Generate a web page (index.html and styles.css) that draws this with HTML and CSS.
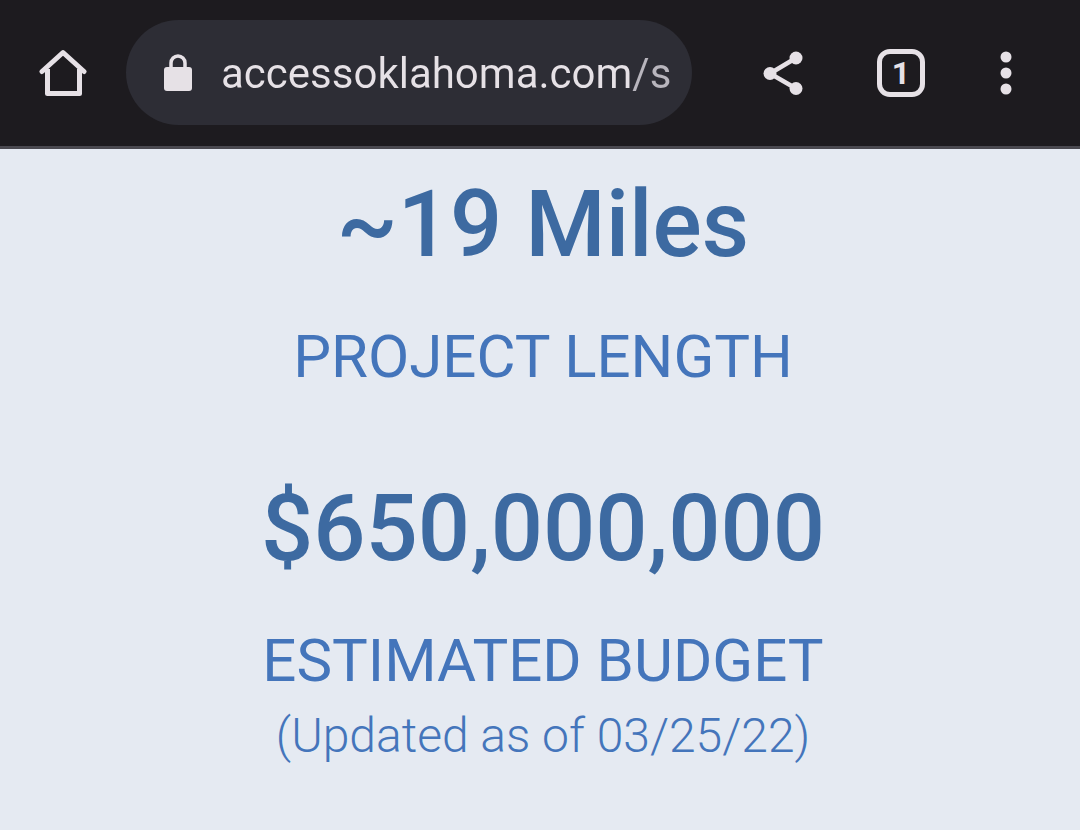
FILE: index.html
```html
<!DOCTYPE html>
<html lang="en">

<head>
  <meta charset="UTF-8">
  <meta name="viewport" content="width=device-width, initial-scale=1.0">
  <title>ACCESS Oklahoma</title>
  <link rel="stylesheet" href="styles.css">
</head>

<body>
  <header class="toolbar">
    <button class="tool home" type="button" aria-label="Home">
      <svg width="48" height="48" viewBox="0 0 48 48" fill="none" stroke="currentColor" stroke-width="5" stroke-linejoin="round">
        <path d="M3 22.500L24 3.500L45 22.500" stroke-linecap="round" />
        <path d="M8.500 20V44.500H40.500V20" />
      </svg>
    </button>
    <div class="address">
      <svg width="30" height="38" viewBox="0 0 30 38" aria-hidden="true">
        <rect x="1" y="13" width="28" height="24" rx="3" fill="currentColor" />
        <path d="M8 14V9a7 7 0 0 1 14 0v5" fill="none" stroke="currentColor" stroke-width="3.500" />
      </svg>
      <input class="url" type="text" value="accessoklahoma.com/s" aria-label="Address" spellcheck="false">
    </div>
    <button class="tool share" type="button" aria-label="Share">
      <svg width="44" height="46" viewBox="0 0 44 46" fill="currentColor">
        <path d="M35 8L9 23.500L35 38.500" fill="none" stroke="currentColor" stroke-width="4.500" />
        <circle cx="35" cy="8" r="6.500" />
        <circle cx="9" cy="23.500" r="6.500" />
        <circle cx="35" cy="38.500" r="6.500" />
      </svg>
    </button>
    <button class="tool tabs" type="button" aria-label="Open tabs">
      <span class="tab-count">1</span>
    </button>
    <button class="tool more" type="button" aria-label="More options">
      <svg width="12" height="44" viewBox="0 0 12 44" fill="currentColor">
        <circle cx="6" cy="6" r="5.500" />
        <circle cx="6" cy="22" r="5.500" />
        <circle cx="6" cy="38" r="5.500" />
      </svg>
    </button>
  </header>

  <main class="stats">
    <section class="stat">
      <p class="value">~19 Miles</p>
      <h2 class="label">PROJECT LENGTH</h2>
    </section>
    <section class="stat">
      <p class="value">$650,000,000</p>
      <h2 class="label">ESTIMATED BUDGET</h2>
      <p class="note">(Updated as of 03/25/22)</p>
    </section>
  </main>
</body>

</html>
```
FILE: styles.css
```css
* {
  box-sizing: border-box;
}

body {
  margin: 0;
  min-height: 100vh;
  background-color: #e5eaf2;
  font-family: Roboto, sans-serif;
}

.toolbar {
  display: flex;
  align-items: center;
  padding: 20px 28px 21px 0;
  background-color: #1d1b1f;
  border-bottom: 3px solid #4a4950;
  color: #e6e1e6;
}

.tool {
  display: flex;
  justify-content: center;
  align-items: center;
  flex-shrink: 0;
  height: 105px;
  padding: 0;
  border: 0;
  background: none;
  color: inherit;
  font-family: inherit;
  cursor: pointer;
}

.home {
  width: 126px;
}

.share {
  width: 118px;
  margin-left: 32px;
}

.tabs {
  width: 118px;
}

.more {
  width: 92px;
}

.address {
  display: flex;
  align-items: center;
  flex: 1;
  gap: 28px;
  min-width: 0;
  height: 105px;
  padding: 0 16px 0 37px;
  border-radius: 53px;
  background-color: #2d2d35;
}

.address svg {
  flex-shrink: 0;
}

.url {
  flex: 1;
  min-width: 0;
  padding: 2px 0 0;
  border: 0;
  outline: 0;
  /* the path is dimmer than the domain */
  background: linear-gradient(to right, #e6e1e6 411px, #b8b5bd 411px);
  background-clip: text;
  color: transparent;
  font-family: inherit;
  font-size: 42px;
  line-height: 52px;
}

.tab-count {
  display: flex;
  justify-content: center;
  align-items: center;
  width: 48px;
  height: 48px;
  border: 5px solid;
  border-radius: 13px;
  font-size: 32px;
  font-weight: 700;
  line-height: 32px;
}

.stats {
  padding: 16px 0 64px 6px;
  text-align: center;
}

.stat + .stat {
  margin-top: 72px;
}

.value,
.label,
.note {
  margin: 0;
}

.value {
  color: #3d6aa1;
  font-size: 92px;
  font-weight: 500;
  line-height: 120px;
}

.label {
  margin-top: 32px;
  color: #4475bb;
  font-size: 60px;
  font-weight: 400;
  line-height: 80px;
}

.note {
  color: #4475bb;
  font-size: 48px;
  font-weight: 300;
  line-height: 70px;
}
```
